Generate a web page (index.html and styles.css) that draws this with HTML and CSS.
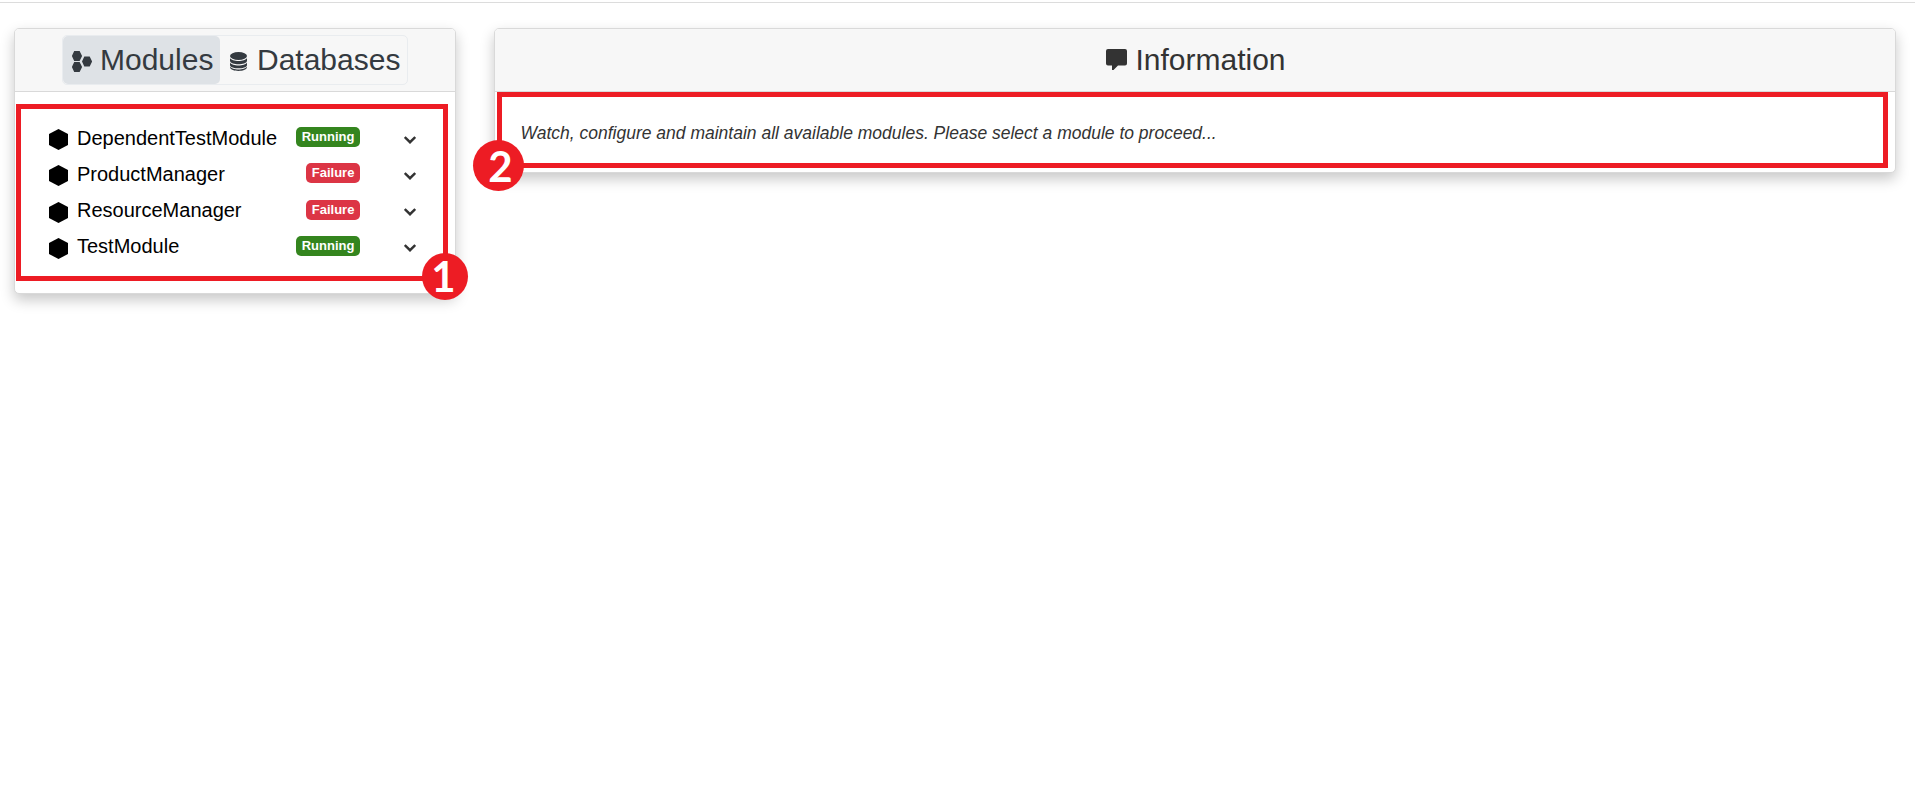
FILE: index.html
```html
<!DOCTYPE html>
<html lang="en">
<head>
<meta charset="utf-8">
<title>Modules</title>
<link rel="stylesheet" href="styles.css">
</head>
<body>
<svg class="defs" width="0" height="0">
  <symbol id="hex" viewBox="0 0 19 21"><path d="M9.500 0 19 5v11l-9.500 5L0 16V5z"/></symbol>
  <symbol id="chevron" viewBox="0 0 12 8"><path d="M.8 1 6 6.200 11.200 1" fill="none" stroke="#333" stroke-width="2.400"/></symbol>
</svg>
<main class="page">
  <section class="card modules">
    <header class="card-header">
      <nav class="tabs">
        <a class="tab active">
          <svg class="tab-icon" width="20" height="21" viewBox="0 0 20 21"><path d="M2.200 0h5.400l2.500 5-2.500 5H2.200L-.1 5zM2.200 11h5.400l2.500 5-2.500 5H2.200L-.1 16zM12.300 5.600h5.400l2.400 4.900-2.400 4.900h-5.400L10 10.500z"/></svg>
          <span>Modules</span>
        </a>
        <a class="tab">
          <svg class="tab-icon db" width="17" height="19" viewBox="0 0 17 19"><ellipse cx="8.500" cy="4" rx="8.500" ry="4"/><path d="M0 6c2 4 15 4 17 0v3c-1 4.300-16 4.300-17 0zM0 10.400c2 4 15 4 17 0v2.800c-1 4.200-16 4.200-17 0zM0 14.600c2 4 15 4 17 0v1c-1 4.500-16 4.500-17 0z"/></svg>
          <span>Databases</span>
        </a>
      </nav>
    </header>
    <ul class="list">
      <li class="row"><svg class="hex"><use href="#hex"/></svg><span class="name">DependentTestModule</span><span class="badge ok">Running</span><svg class="chevron"><use href="#chevron"/></svg></li>
      <li class="row"><svg class="hex"><use href="#hex"/></svg><span class="name">ProductManager</span><span class="badge fail">Failure</span><svg class="chevron"><use href="#chevron"/></svg></li>
      <li class="row"><svg class="hex"><use href="#hex"/></svg><span class="name">ResourceManager</span><span class="badge fail">Failure</span><svg class="chevron"><use href="#chevron"/></svg></li>
      <li class="row"><svg class="hex"><use href="#hex"/></svg><span class="name">TestModule</span><span class="badge ok">Running</span><svg class="chevron"><use href="#chevron"/></svg></li>
    </ul>
    <div class="mark mark-one"></div>
    <span class="pin pin-one">1</span>
  </section>
  <section class="card info">
    <header class="card-header">
      <h3 class="title">
        <svg class="bubble" width="21" height="21" viewBox="0 0 21 21"><path d="M2 0h17a2 2 0 0 1 2 2v12.500a2 2 0 0 1-2 2h-7L7.500 21H6v-4.500H2a2 2 0 0 1-2-2V2a2 2 0 0 1 2-2z"/></svg>
        <span>Information</span>
      </h3>
    </header>
    <p class="hint">Watch, configure and maintain all available modules. Please select a module to proceed...</p>
    <div class="mark mark-two"></div>
    <span class="pin pin-two">2</span>
  </section>
</main>
</body>
</html>
```
FILE: styles.css
```css
* { box-sizing: border-box; }
body {
  margin: 0;
  background: #fff;
  color: #333;
  font-family: "Liberation Sans", Arial, sans-serif;
}
.defs { position: absolute; }
.page {
  display: flex;
  align-items: flex-start;
  gap: 38px;
  min-height: 790px;
  margin-top: 2px;
  padding: 25px 19px 0 14px;
  border-top: 1px solid #dcdcdc;
}
.card {
  position: relative;
  border: 1px solid #d9d9d9;
  border-radius: 5px;
  background: #fff;
  box-shadow: 0 6px 14px rgba(0, 0, 0, 0.22);
}
.modules { width: 442px; height: 266px; }
.info { flex: 1; height: 145px; }
.card-header {
  display: flex;
  justify-content: center;
  height: 63px;
  padding-top: 6px;
  background: #f7f7f7;
  border-bottom: 1px solid #d9d9d9;
  border-radius: 4px 4px 0 0;
}
.tabs {
  display: flex;
  width: 346px;
  height: 50px;
  border: 1px solid #e9ecef;
  border-radius: 5px;
}
.tab {
  display: flex;
  align-items: center;
  padding-left: 9px;
  gap: 8px;
  font-size: 30px;
  line-height: 48px;
  color: #343a40;
  fill: #343a40;
}
.tab.active { width: 157px; background: #dee2e6; border-radius: 5px; }
.tab-icon { flex: none; margin-top: 3px; }
.db { margin-left: 1px; margin-right: 2px; }
.title {
  display: flex;
  align-items: center;
  gap: 8px;
  height: 50px;
  margin: 0 0 0 2px;
  font-size: 30px;
  font-weight: 400;
  line-height: 48px;
  fill: #333;
}
.bubble { margin-bottom: 1px; }
.list { margin: 0; padding: 27.500px 34px 0; list-style: none; color: #000; }
.row { display: flex; height: 36.300px; align-items: flex-start; font-size: 20px; line-height: 36px; }
.hex { width: 19px; height: 21px; margin: 9.500px 9px 0 0; }
.name { flex: 1; }
.badge {
  height: 20px;
  margin-top: 7.500px;
  padding: 0 5.600px;
  border-radius: 5px;
  color: #fff;
  font-size: 13px;
  font-weight: 700;
  line-height: 20px;
}
.ok { background: #34851e; }
.fail { background: #dc3545; }
.chevron { width: 12px; height: 8px; margin: 16px 5.500px 0 43.500px; }
.hint { margin: 28px 0 0 25.500px; font-size: 17.500px; line-height: 26px; font-style: italic; white-space: nowrap; }
.mark { position: absolute; border: 5px solid #ed1c24; }
.mark-one { left: 1px; top: 75px; width: 432px; height: 177px; }
.mark-two { left: 2px; top: 63px; width: 1391px; height: 76px; }
.pin {
  position: absolute;
  border-radius: 50%;
  background: #ed1c24;
  color: #fff;
  font-family: Lato, sans-serif;
  font-size: 42px;
  font-weight: 700;
  text-align: center;
}
.pin-one { left: 407px; top: 224px; width: 46px; height: 47px; line-height: 46px; padding-right: 3px; }
.pin-two { left: -22px; top: 111px; width: 51px; height: 51px; line-height: 53px; padding-left: 4px; }
```
